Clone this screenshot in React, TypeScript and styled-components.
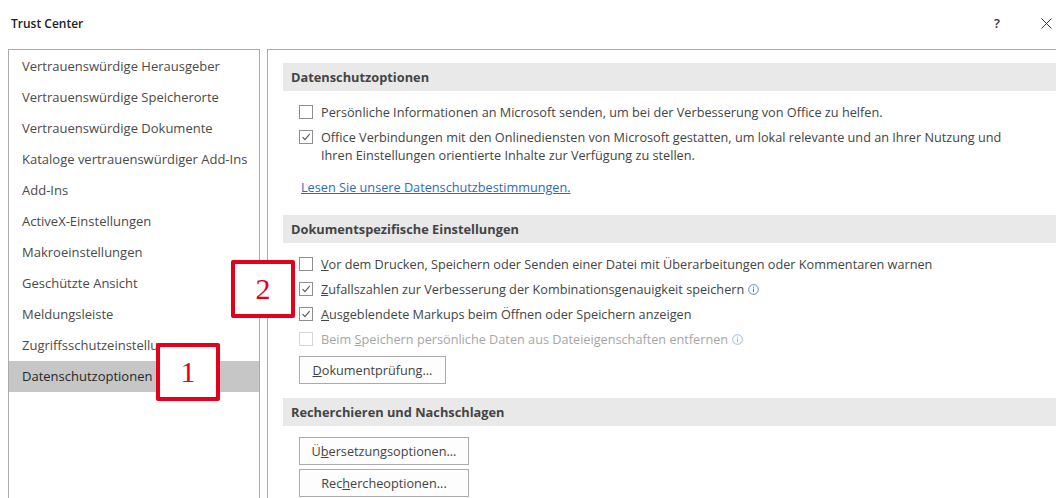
import React from "react";
import styled, { createGlobalStyle } from "styled-components";

const GlobalStyle = createGlobalStyle`
  html, body {
    margin: 0;
    padding: 0;
    background: #ffffff;
  }
`;

const Window = styled.div`
  position: relative;
  width: 1056px;
  height: 498px;
  overflow: hidden;
  background: #ffffff;
  font-family: "Open Sans", "Noto Sans", sans-serif;
  font-size: 12.7px;
  color: #444444;
`;

const TitleBar = styled.header`
  display: flex;
  align-items: center;
  gap: 24px;
  height: 46px;
  padding: 0 0 0 11px;
`;

const Title = styled.h1`
  flex: 1;
  margin: 0;
  font-size: 12px;
  font-weight: 600;
  color: #222222;
`;

const TitleButton = styled.button<{ $width: number }>`
  display: flex;
  align-items: center;
  justify-content: center;
  width: ${(p) => p.$width}px;
  height: 30px;
  border: none;
  background: none;
  color: #333333;
  font-family: inherit;
  font-size: 13px;
  font-weight: 600;
  padding: 0;
`;

const Body = styled.div`
  display: flex;
  gap: 7px;
  padding-left: 8px;
  margin-top: 3px;
`;

const Nav = styled.nav`
  width: 250px;
  height: 520px;
  border: 1px solid #ababab;
  padding-top: 1px;
  flex-shrink: 0;
`;

const NavItem = styled.div<{ $selected?: boolean }>`
  height: 31px;
  line-height: 31px;
  padding-left: 13px;
  white-space: nowrap;
  overflow: hidden;
  font-size: 13px;
  color: ${(p) => (p.$selected ? "#262626" : "#4a4a4a")};
  background: ${(p) => (p.$selected ? "#c6c6c6" : "transparent")};
`;

const Panel = styled.main`
  width: 900px;
  height: 520px;
  border: 1px solid #ababab;
  padding: 13px 0 0 15px;
  flex-shrink: 0;
`;

const SectionHeader = styled.h2`
  margin: 0;
  height: 28px;
  line-height: 28px;
  padding-left: 8px;
  background: #e9e9e9;
  font-size: 12.8px;
  font-weight: 700;
  color: #444444;
`;

const SectionBody = styled.div<{ $top: number; $bottom: number; $gap?: number }>`
  display: flex;
  flex-direction: column;
  align-items: flex-start;
  gap: ${(p) => p.$gap ?? 7}px;
  padding: ${(p) => p.$top}px 0 ${(p) => p.$bottom}px 16px;
`;

const OptionRow = styled.label<{ $disabled?: boolean }>`
  display: flex;
  align-items: flex-start;
  gap: 8px;
  line-height: 18px;
  color: ${(p) => (p.$disabled ? "#a6a6a6" : "#444444")};
`;

const Box = styled.span<{ $disabled?: boolean }>`
  display: flex;
  align-items: center;
  justify-content: center;
  width: 12px;
  height: 12px;
  margin-top: 2px;
  flex-shrink: 0;
  border: 1px solid ${(p) => (p.$disabled ? "#d6d6d6" : "#8e8e8e")};
  background: #ffffff;
`;

const Key = styled.span`
  text-decoration: underline;
`;

const Link = styled.a`
  margin: 7px 0 0 2px;
  color: #2b6cb8;
  text-decoration: underline;
  line-height: 18px;
`;

const Info = styled.span`
  display: inline-flex;
  vertical-align: -1px;
  margin-left: 4px;
`;

const Button = styled.button<{ $width: number }>`
  width: ${(p) => p.$width}px;
  height: 28px;
  border: 1px solid #ababab;
  background: #fdfdfd;
  font-family: inherit;
  font-size: 12.7px;
  color: #444444;
  padding: 0;
`;

const Marker = styled.div<{ $x: number; $y: number }>`
  position: absolute;
  left: ${(p) => p.$x}px;
  top: ${(p) => p.$y}px;
  width: 56px;
  height: 50px;
  border: 4px solid #e2001a;
  border-radius: 2px;
  background: #ffffff;
  display: flex;
  align-items: center;
  justify-content: center;
  font-family: "Liberation Serif", "DejaVu Serif", serif;
  font-size: 30px;
  color: #e2001a;
`;

const navItems = [
  "Vertrauenswürdige Herausgeber",
  "Vertrauenswürdige Speicherorte",
  "Vertrauenswürdige Dokumente",
  "Kataloge vertrauenswürdiger Add-Ins",
  "Add-Ins",
  "ActiveX-Einstellungen",
  "Makroeinstellungen",
  "Geschützte Ansicht",
  "Meldungsleiste",
  "Zugriffsschutzeinstellungen",
  "Datenschutzoptionen",
];

function Check({ checked, disabled }: { checked?: boolean; disabled?: boolean }) {
  return (
    <Box $disabled={disabled}>
      {checked && (
        <svg width="10" height="10" viewBox="0 0 10 10">
          <path d="M1.5 5.2 L4 7.6 L8.6 2.2" fill="none" stroke="#555" strokeWidth="1.1" />
        </svg>
      )}
    </Box>
  );
}

function InfoIcon({ muted }: { muted?: boolean }) {
  const c = muted ? "#8fb2dc" : "#3d7cc9";
  return (
    <Info>
      <svg width="11" height="11" viewBox="0 0 11 11">
        <circle cx="5.5" cy="5.5" r="4.8" fill="none" stroke={c} strokeWidth="0.9" />
        <rect x="5" y="4.5" width="1" height="3.6" fill={c} />
        <rect x="5" y="2.7" width="1" height="1" fill={c} />
      </svg>
    </Info>
  );
}

export default function App() {
  return (
    <Window>
      <GlobalStyle />
      <TitleBar>
        <Title>Trust Center</Title>
        <TitleButton $width={30}>?</TitleButton>
        <TitleButton $width={20}>
          <svg width="11" height="11" viewBox="0 0 11 11">
            <path d="M0.5 0.5 L10.5 10.5 M10.5 0.5 L0.5 10.5" stroke="#333" strokeWidth="1" />
          </svg>
        </TitleButton>
      </TitleBar>
      <Body>
        <Nav>
          {navItems.map((item) => (
            <NavItem key={item} $selected={item === "Datenschutzoptionen"}>
              {item}
            </NavItem>
          ))}
        </Nav>
        <Panel>
          <SectionHeader>Datenschutzoptionen</SectionHeader>
          <SectionBody $top={12} $bottom={19}>
            <OptionRow>
              <Check />
              <span>
                Persönliche Informationen an Microsoft senden, um bei der Verbesserung von Office zu
                helfen.
              </span>
            </OptionRow>
            <OptionRow>
              <Check checked />
              <span>
                Office Verbindungen mit den Onlinediensten von Microsoft gestatten, um lokal
                relevante und an Ihrer Nutzung und
                <br />
                Ihren Einstellungen orientierte Inhalte zur Verfügung zu stellen.
              </span>
            </OptionRow>
            <Link href="#">Lesen Sie unsere Datenschutzbestimmungen.</Link>
          </SectionBody>

          <SectionHeader>Dokumentspezifische Einstellungen</SectionHeader>
          <SectionBody $top={12} $bottom={14}>
            <OptionRow>
              <Check />
              <span>
                <Key>V</Key>or dem Drucken, Speichern oder Senden einer Datei mit Überarbeitungen
                oder Kommentaren warnen
              </span>
            </OptionRow>
            <OptionRow>
              <Check checked />
              <span>
                <Key>Z</Key>ufallszahlen zur Verbesserung der Kombinationsgenauigkeit speichern
                <InfoIcon />
              </span>
            </OptionRow>
            <OptionRow>
              <Check checked />
              <span>
                <Key>A</Key>usgeblendete Markups beim Öffnen oder Speichern anzeigen
              </span>
            </OptionRow>
            <OptionRow $disabled>
              <Check disabled />
              <span>
                Beim <Key>S</Key>peichern persönliche Daten aus Dateieigenschaften entfernen
                <InfoIcon muted />
              </span>
            </OptionRow>
            <Button $width={147} style={{ marginTop: 1 }}>
              <Key>D</Key>okumentprüfung...
            </Button>
          </SectionBody>

          <SectionHeader>Recherchieren und Nachschlagen</SectionHeader>
          <SectionBody $top={11} $bottom={0} $gap={4}>
            <Button $width={170}>
              Ü<Key>b</Key>ersetzungsoptionen...
            </Button>
            <Button $width={170}>
              Rec<Key>h</Key>ercheoptionen...
            </Button>
          </SectionBody>
        </Panel>
      </Body>

      <Marker $x={156} $y={343}>1</Marker>
      <Marker $x={231} $y={260}>2</Marker>
    </Window>
  );
}
